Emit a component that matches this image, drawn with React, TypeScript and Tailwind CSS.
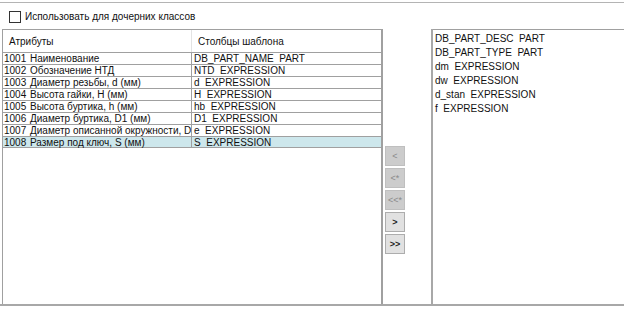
const attrs = [
  ['1001', 'Наименование', 'DB_PART_NAME  PART'],
  ['1002', 'Обозначение НТД', 'NTD  EXPRESSION'],
  ['1003', 'Диаметр резьбы, d (мм)', 'd  EXPRESSION'],
  ['1004', 'Высота гайки, H (мм)', 'H  EXPRESSION'],
  ['1005', 'Высота буртика, h (мм)', 'hb  EXPRESSION'],
  ['1006', 'Диаметр буртика, D1 (мм)', 'D1  EXPRESSION'],
  ['1007', 'Диаметр описанной окружности, D', 'e  EXPRESSION'],
  ['1008', 'Размер под ключ, S (мм)', 'S  EXPRESSION'],
]

const columns = [
  'DB_PART_DESC  PART',
  'DB_PART_TYPE  PART',
  'dm  EXPRESSION',
  'dw  EXPRESSION',
  'd_stan  EXPRESSION',
  'f  EXPRESSION',
]

const buttons = [
  { label: '<', enabled: false },
  { label: '<*', enabled: false },
  { label: '<<*', enabled: false },
  { label: '>', enabled: true },
  { label: '>>', enabled: true },
]

export default function App() {
  return (
    <div
      className="w-[624px] h-[309px] bg-white text-[10px] text-[#111] overflow-hidden"
      style={{ fontFamily: '"Liberation Sans", Arial, sans-serif' }}
    >
      <div className="h-[2px]" />
      <div className="border-t border-[#b4b4b4] h-[27px] flex items-center pl-[9px]">
        <span className="w-[12px] h-[12px] border border-[#333] bg-white mt-[2px]" />
        <span className="ml-[4px] mt-[1px] whitespace-pre">Использовать для дочерних классов</span>
      </div>

      <div className="flex h-[277px] border-b-2 border-[#a8a8a8]">
        {/* attributes table */}
        <div className="ml-[2px] w-[381px] border border-r-2 border-[#a0a0a0] border-b-0 flex flex-col">
          <div className="grid grid-cols-[189px_1fr] h-[22px] items-center">
            <div className="pl-[6px] h-full flex items-center border-r border-[#e3e3e3]">Атрибуты</div>
            <div className="pl-[6px]">Столбцы шаблона</div>
          </div>
          {attrs.map((a, i) => (
            <div
              key={a[0]}
              className={
                'grid grid-cols-[189px_1fr] h-[12px] leading-[11px] border-t border-[#a0a0a0] ' +
                (i === attrs.length - 1 ? 'bg-[#cde7ec] border-b' : '')
              }
            >
              <div className="flex border-r border-[#a0a0a0] whitespace-pre overflow-hidden">
                <span className="w-[27px] shrink-0 pl-[1px]">{a[0]}</span>
                <span>{a[1]}</span>
              </div>
              <div className="pl-[2px] whitespace-pre">{a[2]}</div>
            </div>
          ))}
        </div>

        {/* move buttons */}
        <div className="w-[50px] flex flex-col gap-[2px] pt-[117px] pl-[2px] border-r-2 border-[#a8a8a8]">
          {buttons.map(b => (
            <button
              key={b.label}
              className={
                'w-[20px] h-[20px] border text-[9px] leading-none flex items-center justify-center ' +
                (b.enabled
                  ? 'bg-[#e1e1e1] border-[#adadad] text-[#222] font-bold'
                  : 'bg-[#cccccc] border-[#bfbfbf] text-[#8a8a8a]')
              }
            >
              {b.label}
            </button>
          ))}
        </div>

        {/* template columns */}
        <div className="flex-1 border-t border-[#a0a0a0] pt-[2px] pl-[2px] flex flex-col">
          {columns.map(c => (
            <div key={c} className="h-[14px] leading-[14px] whitespace-pre">{c}</div>
          ))}
        </div>
      </div>
    </div>
  )
}
